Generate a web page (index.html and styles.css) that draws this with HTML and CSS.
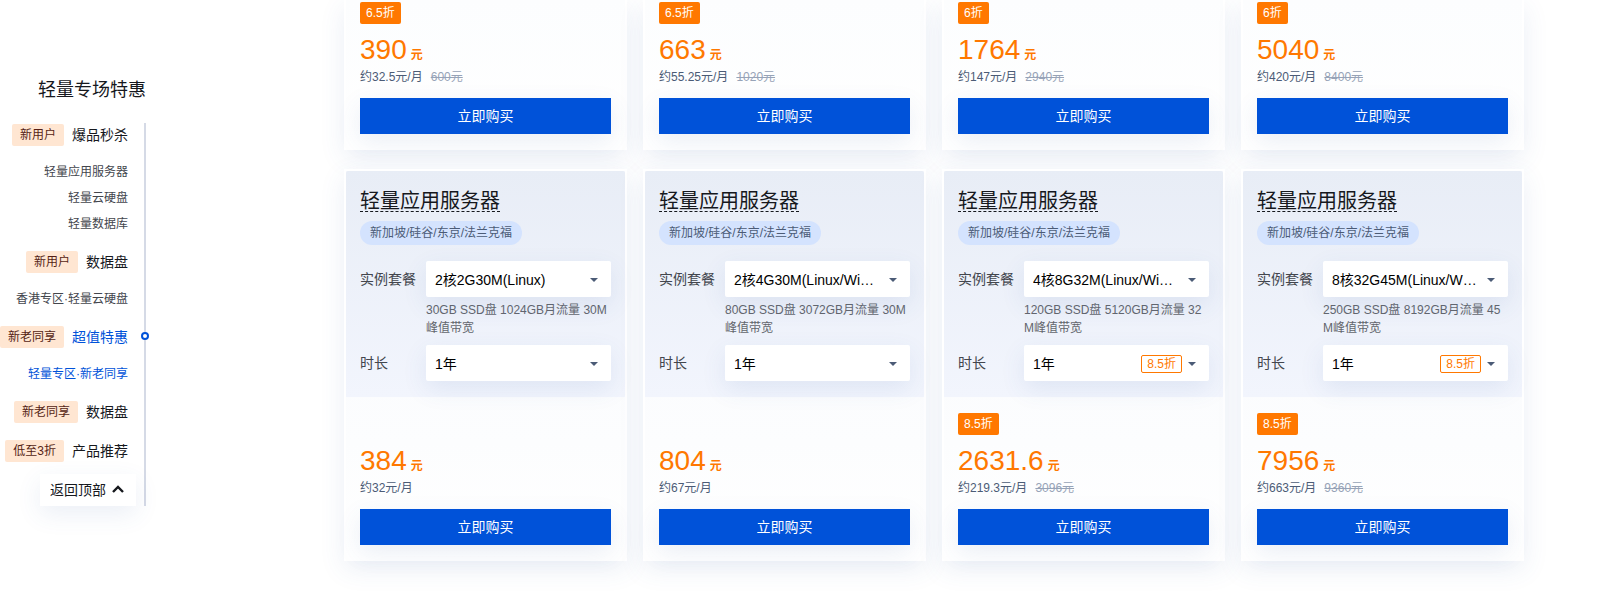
FILE: index.html
```html
<!DOCTYPE html>
<html lang="zh-CN">
<head>
<meta charset="utf-8">
<title>轻量专场特惠</title>
<link rel="stylesheet" href="styles.css">
</head>
<body>
<div class="page">
  <nav class="side" aria-label="轻量专场特惠">
    <h2 class="side-title">轻量专场特惠</h2>
    <div class="rail">
      <ul class="groups">
        <li>
          <a class="group" href="#"><span class="tag">新用户</span>爆品秒杀</a>
          <ul class="subs">
            <li><a href="#">轻量应用服务器</a></li>
            <li><a href="#">轻量云硬盘</a></li>
            <li><a href="#">轻量数据库</a></li>
          </ul>
        </li>
        <li>
          <a class="group" href="#"><span class="tag">新用户</span>数据盘</a>
          <ul class="subs"><li><a href="#">香港专区·轻量云硬盘</a></li></ul>
        </li>
        <li class="active">
          <a class="group" href="#"><span class="tag">新老同享</span>超值特惠</a>
          <ul class="subs"><li><a href="#">轻量专区·新老同享</a></li></ul>
        </li>
        <li><a class="group" href="#"><span class="tag">新老同享</span>数据盘</a></li>
        <li><a class="group" href="#"><span class="tag">低至3折</span>产品推荐</a></li>
      </ul>
      <button class="back-top" type="button">返回顶部
        <svg width="12" height="8" viewBox="0 0 12 8" aria-hidden="true"><path d="M1 7l5-5 5 5" fill="none" stroke="currentColor" stroke-width="2.4"/></svg>
      </button>
    </div>
  </nav>

  <main class="cards">
    <article class="card card-cut">
      <div class="offer">
        <div class="off-row"><span class="off">6.5折</span></div>
        <p class="price">390<b>元</b></p>
        <p class="monthly">约32.5元/月<s>600元</s></p>
        <button class="buy" type="button">立即购买</button>
      </div>
    </article>
    <article class="card card-cut">
      <div class="offer">
        <div class="off-row"><span class="off">6.5折</span></div>
        <p class="price">663<b>元</b></p>
        <p class="monthly">约55.25元/月<s>1020元</s></p>
        <button class="buy" type="button">立即购买</button>
      </div>
    </article>
    <article class="card card-cut">
      <div class="offer">
        <div class="off-row"><span class="off">6折</span></div>
        <p class="price">1764<b>元</b></p>
        <p class="monthly">约147元/月<s>2940元</s></p>
        <button class="buy" type="button">立即购买</button>
      </div>
    </article>
    <article class="card card-cut">
      <div class="offer">
        <div class="off-row"><span class="off">6折</span></div>
        <p class="price">5040<b>元</b></p>
        <p class="monthly">约420元/月<s>8400元</s></p>
        <button class="buy" type="button">立即购买</button>
      </div>
    </article>

    <article class="card">
      <div class="config">
        <h3 class="name"><a href="#">轻量应用服务器</a></h3>
        <span class="region">新加坡/硅谷/东京/法兰克福</span>
        <div class="fields">
          <label for="plan1">实例套餐</label>
          <div class="pick">
            <select id="plan1"><option>2核2G30M(Linux)</option></select>
            <svg class="caret" width="8" height="4" viewBox="0 0 8 4" aria-hidden="true"><path d="M0 0h8L4 4z"/></svg>
          </div>
          <p class="spec">30GB SSD盘 1024GB月流量 30M峰值带宽</p>
          <label for="term1">时长</label>
          <div class="pick">
            <select id="term1"><option>1年</option></select>
            <svg class="caret" width="8" height="4" viewBox="0 0 8 4" aria-hidden="true"><path d="M0 0h8L4 4z"/></svg>
          </div>
        </div>
      </div>
      <div class="offer">
        <div class="off-row"></div>
        <p class="price">384<b>元</b></p>
        <p class="monthly">约32元/月</p>
        <button class="buy" type="button">立即购买</button>
      </div>
    </article>
    <article class="card">
      <div class="config">
        <h3 class="name"><a href="#">轻量应用服务器</a></h3>
        <span class="region">新加坡/硅谷/东京/法兰克福</span>
        <div class="fields">
          <label for="plan2">实例套餐</label>
          <div class="pick">
            <select id="plan2"><option>2核4G30M(Linux/Windows)</option></select>
            <svg class="caret" width="8" height="4" viewBox="0 0 8 4" aria-hidden="true"><path d="M0 0h8L4 4z"/></svg>
          </div>
          <p class="spec">80GB SSD盘 3072GB月流量 30M峰值带宽</p>
          <label for="term2">时长</label>
          <div class="pick">
            <select id="term2"><option>1年</option></select>
            <svg class="caret" width="8" height="4" viewBox="0 0 8 4" aria-hidden="true"><path d="M0 0h8L4 4z"/></svg>
          </div>
        </div>
      </div>
      <div class="offer">
        <div class="off-row"></div>
        <p class="price">804<b>元</b></p>
        <p class="monthly">约67元/月</p>
        <button class="buy" type="button">立即购买</button>
      </div>
    </article>
    <article class="card">
      <div class="config">
        <h3 class="name"><a href="#">轻量应用服务器</a></h3>
        <span class="region">新加坡/硅谷/东京/法兰克福</span>
        <div class="fields">
          <label for="plan3">实例套餐</label>
          <div class="pick">
            <select id="plan3"><option>4核8G32M(Linux/Windows)</option></select>
            <svg class="caret" width="8" height="4" viewBox="0 0 8 4" aria-hidden="true"><path d="M0 0h8L4 4z"/></svg>
          </div>
          <p class="spec">120GB SSD盘 5120GB月流量 32M峰值带宽</p>
          <label for="term3">时长</label>
          <div class="pick">
            <select id="term3"><option>1年</option></select>
            <span class="pick-off">8.5折</span>
            <svg class="caret" width="8" height="4" viewBox="0 0 8 4" aria-hidden="true"><path d="M0 0h8L4 4z"/></svg>
          </div>
        </div>
      </div>
      <div class="offer">
        <div class="off-row"><span class="off">8.5折</span></div>
        <p class="price">2631.6<b>元</b></p>
        <p class="monthly">约219.3元/月<s>3096元</s></p>
        <button class="buy" type="button">立即购买</button>
      </div>
    </article>
    <article class="card">
      <div class="config">
        <h3 class="name"><a href="#">轻量应用服务器</a></h3>
        <span class="region">新加坡/硅谷/东京/法兰克福</span>
        <div class="fields">
          <label for="plan4">实例套餐</label>
          <div class="pick">
            <select id="plan4"><option>8核32G45M(Linux/Windows)</option></select>
            <svg class="caret" width="8" height="4" viewBox="0 0 8 4" aria-hidden="true"><path d="M0 0h8L4 4z"/></svg>
          </div>
          <p class="spec">250GB SSD盘 8192GB月流量 45M峰值带宽</p>
          <label for="term4">时长</label>
          <div class="pick">
            <select id="term4"><option>1年</option></select>
            <span class="pick-off">8.5折</span>
            <svg class="caret" width="8" height="4" viewBox="0 0 8 4" aria-hidden="true"><path d="M0 0h8L4 4z"/></svg>
          </div>
        </div>
      </div>
      <div class="offer">
        <div class="off-row"><span class="off">8.5折</span></div>
        <p class="price">7956<b>元</b></p>
        <p class="monthly">约663元/月<s>9360元</s></p>
        <button class="buy" type="button">立即购买</button>
      </div>
    </article>
  </main>
</div>
</body>
</html>
```
FILE: styles.css
```css
*, *::after {
  box-sizing: border-box;
}

body {
  margin: 0;
  background: #fff;
  color: #16181d;
  font-family: "Liberation Sans", "Noto Sans CJK SC", sans-serif;
  font-size: 14px;
}

h2, h3, p, ul {
  margin: 0;
  padding: 0;
  font-weight: 400;
}

ul {
  list-style: none;
}

a {
  color: inherit;
  text-decoration: none;
}

button, select {
  border: 0;
  font: inherit;
}

.page {
  display: flex;
  align-items: flex-start;
  gap: 198px;
  padding-right: 85px;
}

/* Side navigation */
.side {
  flex: none;
  padding-top: 78px;
}

.side-title {
  margin-bottom: 21px;
  font-size: 18px;
  line-height: 24px;
  text-align: right;
}

.rail {
  display: flex;
  flex-direction: column;
  align-items: flex-end;
  gap: 12px;
  padding-top: 1px;
  border-right: 2px solid #d5dae6;
}

.groups {
  display: flex;
  flex-direction: column;
  gap: 17px;
  padding-right: 16px;
}

.group {
  display: flex;
  justify-content: flex-end;
  align-items: center;
  gap: 8px;
  line-height: 22px;
}

.tag {
  padding: 0 8px;
  border-radius: 2px;
  background: #ffe6d2;
  color: #551e14;
  font-size: 12px;
}

.subs {
  display: flex;
  flex-direction: column;
  gap: 6px;
  margin-top: 16px;
  color: #43464d;
  font-size: 12px;
  line-height: 20px;
  text-align: right;
}

.active {
  position: relative;
  color: #0052d9;
}

.active .subs {
  color: inherit;
}

.active::after {
  content: "";
  position: absolute;
  top: 6px;
  right: -21px;
  width: 8px;
  height: 8px;
  border: 2px solid #0052d9;
  border-radius: 50%;
  background: #fff;
}

.back-top {
  display: flex;
  align-items: center;
  gap: 6px;
  height: 32px;
  margin-right: 8px;
  padding: 0 12px 2px 10px;
  background: #fff;
  color: #16181d;
  box-shadow: 0 8px 24px rgba(55, 99, 170, 0.1);
}

/* Product cards */
.cards {
  flex: 1;
  display: grid;
  grid-template-columns: repeat(4, minmax(0, 1fr));
  gap: 19px 16px;
  padding-bottom: 42px;
}

.card {
  border: 2px solid #fff;
  background: linear-gradient(#f8f9fd, #fcfdfe 70%, #fff);
  box-shadow: 0 8px 24px rgba(55, 99, 170, 0.1);
}

.card-cut {
  border-top: 0;
  background: linear-gradient(#fcfdfe, #fff);
}

.config {
  padding: 16px 14px;
  border-radius: 2px 2px 0 0;
  background: linear-gradient(#e8edf6, #f2f5fd);
}

.name {
  display: flex;
  margin-bottom: 9px;
  font-size: 20px;
  line-height: 28px;
}

.name a {
  height: 25px;
  border-bottom: 1px dashed #16181d;
}

.region {
  display: inline-block;
  padding: 0 10px;
  border-radius: 12px;
  background: #d4e3fe;
  color: #4b5b76;
  font-size: 12px;
  line-height: 24px;
  vertical-align: top;
}

.fields {
  display: grid;
  grid-template-columns: 66px minmax(0, 1fr);
  margin-top: 16px;
}

.fields label {
  color: #43464d;
  line-height: 36px;
}

.pick {
  position: relative;
}

.pick select {
  display: block;
  width: 100%;
  height: 36px;
  padding: 2px 30px 0 9px;
  appearance: none;
  border-radius: 2px;
  background: #fff;
  color: #000;
  text-overflow: ellipsis;
  white-space: nowrap;
  overflow: hidden;
  box-shadow: 0 8px 24px rgba(55, 99, 170, 0.1);
}

.caret {
  position: absolute;
  top: 17px;
  right: 13px;
  fill: #4b5b76;
  pointer-events: none;
}

.pick-off {
  position: absolute;
  top: 10px;
  right: 27px;
  padding: 0 5px;
  border: 1px solid #ff7800;
  border-radius: 2px;
  color: #ff7800;
  font-size: 12px;
  line-height: 16px;
  pointer-events: none;
}

.spec {
  grid-column: 2;
  padding: 4px 0 8px;
  color: #63666d;
  font-size: 12px;
  line-height: 18px;
  word-break: break-all;
}

.offer {
  padding: 16px 14px 14px;
}

.card-cut .offer {
  padding-top: 2px;
}

.off-row {
  display: flex;
  height: 22px;
  margin-bottom: 8px;
}

.off {
  padding: 0 6px;
  border-radius: 2px;
  background: #ff7800;
  color: #fff;
  font-size: 12px;
  line-height: 22px;
}

.price {
  color: #ff7800;
  font-size: 28px;
  line-height: 36px;
}

.price b {
  margin-left: 4px;
  font-size: 12px;
  line-height: 12px;
}

.monthly {
  margin-bottom: 12px;
  color: #4b5b76;
  font-size: 12px;
  line-height: 18px;
}

.monthly s {
  margin-left: 8px;
  color: #97a3b7;
}

.buy {
  display: block;
  width: 100%;
  height: 36px;
  padding: 0 0 2px;
  background: #0052d9;
  color: #fff;
  box-shadow: 0 8px 24px rgba(55, 99, 170, 0.1);
}
```
